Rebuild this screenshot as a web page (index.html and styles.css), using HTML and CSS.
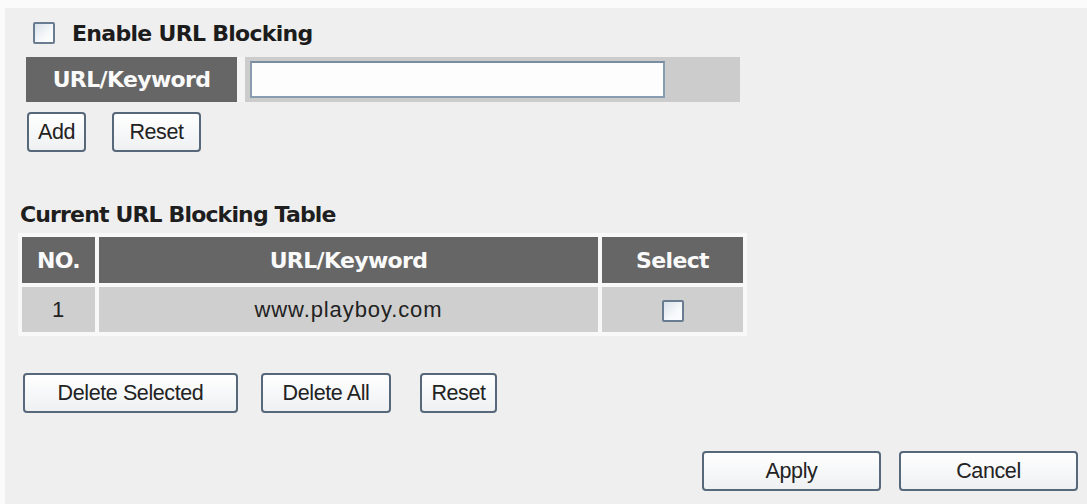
FILE: index.html
```html
<!DOCTYPE html>
<html>
<head>
<meta charset="utf-8">
<link rel="stylesheet" href="styles.css">
</head>
<body>
<div class="page">
  <label class="enable"><span class="cb"></span><span class="enable-text">Enable URL Blocking</span></label>
  <div class="kw-row">
    <div class="kw-label">URL/Keyword</div>
    <div class="kw-field"><span class="kw-input"></span></div>
  </div>
  <div class="btn-row first">
    <span class="btn btn-add">Add</span>
    <span class="btn btn-reset1">Reset</span>
  </div>
  <div class="table-title">Current URL Blocking Table</div>
  <table class="tbl">
    <tr class="head">
      <th class="c-no">NO.</th>
      <th class="c-url">URL/Keyword</th>
      <th class="c-sel">Select</th>
    </tr>
    <tr class="data">
      <td class="c-no">1</td>
      <td class="c-url">www.playboy.com</td>
      <td class="c-sel"><span class="cb cb-sm"></span></td>
    </tr>
  </table>
  <div class="btn-row second">
    <span class="btn btn-delsel">Delete Selected</span>
    <span class="btn btn-delall">Delete All</span>
    <span class="btn btn-reset2">Reset</span>
  </div>
  <div class="btn-row actions">
    <span class="btn btn-apply">Apply</span>
    <span class="btn btn-cancel">Cancel</span>
  </div>
</div>
</body>
</html>
```

FILE: styles.css
```css
html, body {
  margin: 0;
  padding: 0;
  background: #fbfbfb;
}
body {
  font-family: "Liberation Sans", Arial, sans-serif;
  color: #222;
}
.page {
  margin: 8px 0 0 5px;
  height: 496px;
  background: #efefef;
  box-sizing: border-box;
  padding: 10px 0 0 15px;
  display: flex;
  flex-direction: column;
  align-items: flex-start;
}
.cb {
  display: inline-block;
  box-sizing: border-box;
  width: 22px;
  height: 22px;
  border: 2px solid #6a7c8f;
  border-radius: 2px;
  background: linear-gradient(135deg, #d9e1ea, #f6f9fb 60%, #fdfdfd);
}
.enable {
  display: flex;
  align-items: center;
  height: 30px;
  margin-left: 13px;
}
.enable-text {
  margin-left: 17px;
  font-family: "DejaVu Sans", sans-serif;
  font-weight: bold;
  font-size: 22px;
  letter-spacing: -0.7px;
  color: #1c1c1c;
}
.kw-row {
  display: flex;
  margin-top: 9px;
  margin-left: 6px;
  height: 45px;
  background: #f4f4f4;
}
.kw-label {
  width: 211px;
  background: #666666;
  color: #fafafa;
  font-family: "DejaVu Sans", sans-serif;
  font-weight: bold;
  font-size: 22px;
  letter-spacing: -0.65px;
  display: flex;
  align-items: center;
  justify-content: center;
}
.kw-field {
  margin-left: 8px;
  width: 495px;
  background: #cccccc;
  display: flex;
  align-items: center;
  padding-left: 5px;
  box-sizing: border-box;
}
.kw-input {
  display: block;
  width: 415px;
  height: 37px;
  box-sizing: border-box;
  border: 2px solid #8a9db0;
  border-top-color: #7b8ea1;
  background: #fdfdfd;
}
.btn-row {
  display: flex;
}
.btn {
  display: flex;
  align-items: center;
  justify-content: center;
  box-sizing: border-box;
  height: 40px;
  border: 2px solid #56687a;
  border-radius: 4px;
  background: linear-gradient(#ffffff, #eef0f2);
  font-family: "Liberation Sans", Arial, sans-serif;
  font-size: 21.5px;
  letter-spacing: -0.4px;
  color: #222;
}
.btn-row.first {
  margin-top: 10px;
  margin-left: 7px;
  gap: 26px;
}
.btn-add { width: 59px; }
.btn-reset1 { width: 89px; }
.table-title {
  margin-top: 50px;
  font-family: "DejaVu Sans", sans-serif;
  font-weight: bold;
  font-size: 22px;
  letter-spacing: -0.85px;
  color: #1e1e1e;
}
.tbl {
  margin-top: 6px;
  border-collapse: separate;
  border-spacing: 4px;
  background: #f8f8f8;
  margin-left: -2px;
}
.tbl th {
  height: 46px;
  box-sizing: border-box;
  background: #666666;
  color: #fafafa;
  font-family: "DejaVu Sans", sans-serif;
  font-weight: bold;
  font-size: 22px;
  letter-spacing: -0.65px;
  padding: 0;
}
.tbl td {
  height: 45px;
  box-sizing: border-box;
  background: #cfcfcf;
  text-align: center;
  font-size: 22px;
  letter-spacing: 0.9px;
  color: #222;
  padding: 0;
}
.tbl .c-no { width: 73px; }
.tbl .c-url { width: 499px; }
.tbl .c-sel { width: 141px; }
.cb-sm {
  vertical-align: middle;
}
.btn-row.second {
  margin-top: 37px;
  margin-left: 3px;
}
.btn-delsel { width: 215px; }
.btn-delall { width: 130px; margin-left: 23px; }
.btn-reset2 { width: 77px; margin-left: 29px; }
.btn-row.actions {
  margin-top: 38px;
  align-self: flex-end;
  margin-right: 9px;
  gap: 18px;
}
.btn-apply { width: 179px; }
.btn-cancel { width: 179px; }
```
